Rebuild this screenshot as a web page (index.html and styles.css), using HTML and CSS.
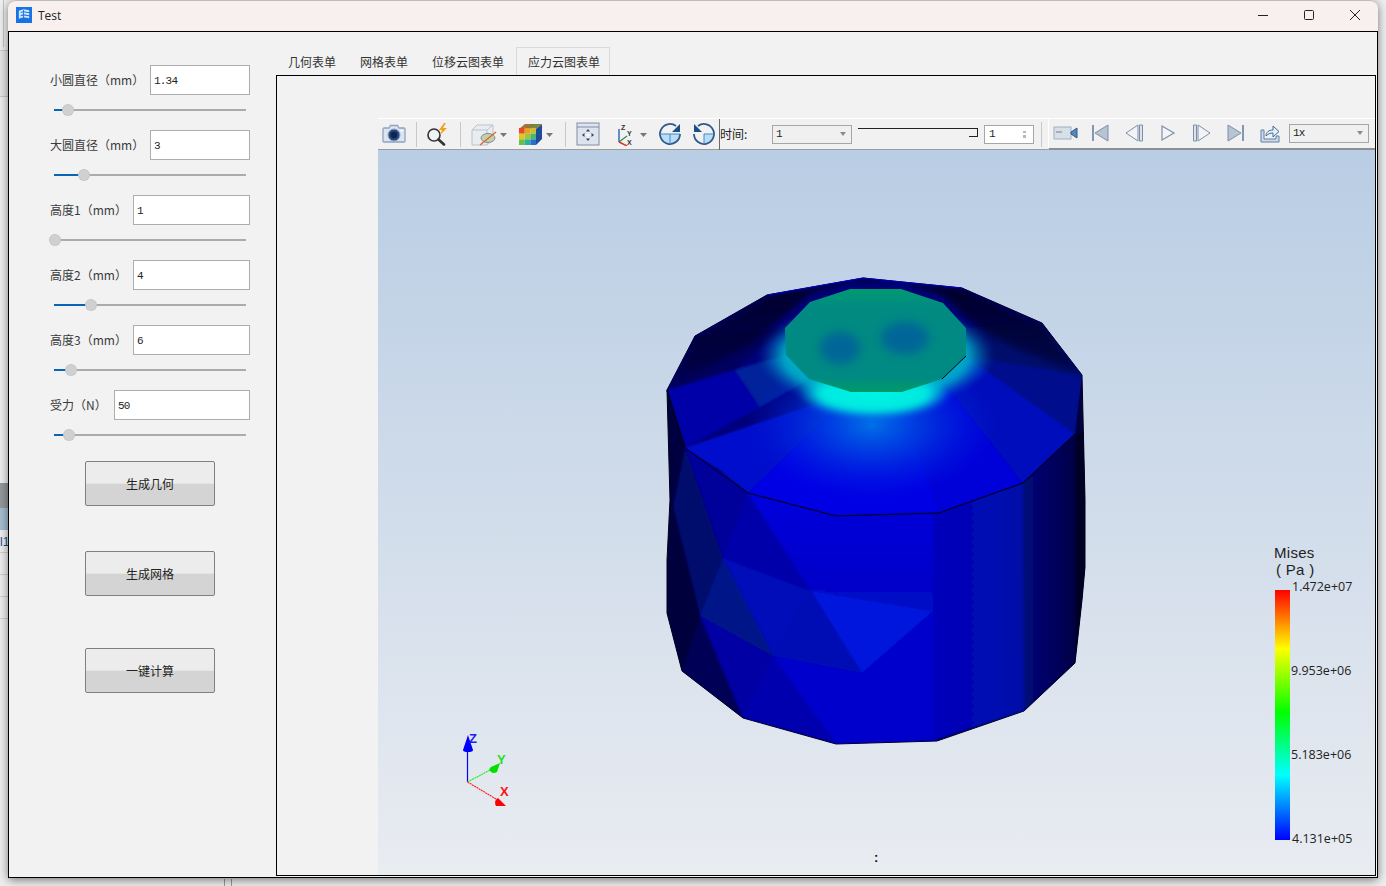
FILE: index.html
```html
<!DOCTYPE html>
<html lang="zh">
<head>
<meta charset="utf-8">
<title>Test</title>
<link rel="stylesheet" href="styles.css">
</head>
<body>
<div class="desk-top"></div>
<div class="desk-mid"></div>
<div class="desk-a"></div>
<div class="desk-b"></div>
<div class="desk-c">l1</div>
<div class="desk-lines"></div>
<div class="desk-d"></div>
<div class="window">
  <header class="titlebar">
    <svg class="app-icon" width="16" height="16" viewBox="0 0 17 17">
      <rect width="17" height="17" fill="#1673e6"/>
      <path d="M3 4l5-1.500 6 1v2l-6-1-3 .8v1.200l3-.8 6 1v2l-6-1-3 .8v1.200l3-.8 6 1v2l-6-1-5 1.500z" fill="#d5e6fb"/>
      <path d="M8 3v10" stroke="#1673e6" stroke-width="1"/>
    </svg>
    <span class="app-title">Test</span>
    <div class="caption">
      <span class="cap-btn"><svg width="12" height="12" viewBox="0 0 12 12"><path d="M1 6.500h10" stroke="#222" fill="none"/></svg></span>
      <span class="cap-btn"><svg width="12" height="12" viewBox="0 0 12 12"><rect x="1.500" y="1.500" width="9" height="9" rx="1" stroke="#222" fill="none"/></svg></span>
      <span class="cap-btn"><svg width="12" height="12" viewBox="0 0 12 12"><path d="M1 1l10 10M11 1L1 11" stroke="#222" fill="none"/></svg></span>
    </div>
  </header>
  <div class="body">
    <aside class="panel">
      <div class="param">
        <div class="row"><span class="label">小圆直径（mm）</span><span class="field w100">1.34</span></div>
        <div class="slider"><i class="fill" style="width:14px"></i><i class="thumb"></i><i class="rest"></i></div>
      </div>
      <div class="param">
        <div class="row"><span class="label">大圆直径（mm）</span><span class="field w100">3</span></div>
        <div class="slider"><i class="fill" style="width:30px"></i><i class="thumb"></i><i class="rest"></i></div>
      </div>
      <div class="param">
        <div class="row"><span class="label">高度1（mm）</span><span class="field w117">1</span></div>
        <div class="slider"><i class="fill" style="width:1px"></i><i class="thumb"></i><i class="rest"></i></div>
      </div>
      <div class="param">
        <div class="row"><span class="label">高度2（mm）</span><span class="field w117">4</span></div>
        <div class="slider"><i class="fill" style="width:37px"></i><i class="thumb"></i><i class="rest"></i></div>
      </div>
      <div class="param">
        <div class="row"><span class="label">高度3（mm）</span><span class="field w117">6</span></div>
        <div class="slider"><i class="fill" style="width:17px"></i><i class="thumb"></i><i class="rest"></i></div>
      </div>
      <div class="param">
        <div class="row"><span class="label">受力（N）</span><span class="field w136">50</span></div>
        <div class="slider"><i class="fill" style="width:15px"></i><i class="thumb"></i><i class="rest"></i></div>
      </div>
      <button class="action a1">生成几何</button>
      <button class="action a2">生成网格</button>
      <button class="action a3">一键计算</button>
    </aside>
    <main class="main">
      <nav class="tabs">
        <span class="tab">几何表单</span>
        <span class="tab">网格表单</span>
        <span class="tab">位移云图表单</span>
        <span class="tab active">应力云图表单</span>
      </nav>
      <section class="pane">
        <div class="viewport">
          <div class="toolbar">
            <span class="ib w32">
              <svg width="24" height="24" viewBox="0 0 24 24"><path d="M2 6h5l1.500-2.500h7L17 6h5a1 1 0 0 1 1 1v12a1 1 0 0 1-1 1H2a1 1 0 0 1-1-1V7a1 1 0 0 1 1-1z" fill="#dbe4f0" stroke="#8fa3c0" stroke-width="1.300"/><circle cx="12" cy="13" r="6" fill="#2a4a80" stroke="#8fa3c0"/><circle cx="12" cy="13" r="3.400" fill="#0f2550"/><rect x="18.500" y="8" width="2.500" height="1.500" fill="#fff"/></svg>
            </span>
            <i class="sep m6"></i>
            <span class="ib w40">
              <svg width="24" height="24" viewBox="0 0 24 24"><circle cx="9" cy="13" r="6" fill="#eef3f8" stroke="#333" stroke-width="1.600"/><path d="M13.500 17.500l5.500 5" stroke="#333" stroke-width="2.600" stroke-linecap="round"/><path d="M19 1l-5 7h3l-2 5 7-7h-4l3-5z" fill="#f2a31c"/></svg>
            </span>
            <i class="sep m3"></i>
            <span class="ib w46 left">
              <svg width="46" height="24" viewBox="0 0 46 24"><path d="M11 8l5-5h16v15l-6 5H11z" fill="#e9edf2" stroke="#b9c3d2"/><path d="M11 8h15v15M26 8l6-5" fill="none" stroke="#b9c3d2"/><ellipse cx="27" cy="16" rx="7" ry="4.500" fill="#c4d0a8" stroke="#889"/><path d="M19 23l16-13" stroke="#d8622a" stroke-width="1.200"/><path d="M39 11h7l-3.500 4z" fill="#777"/></svg>
            </span>
            <span class="ib w46 left">
              <svg width="46" height="24" viewBox="0 0 46 24"><path d="M29 7l6-5v15l-6 6z" fill="#1e4c9c"/><path d="M12 7l6-5h17l-6 5z" fill="#8a7a3a"/><path d="M14 5.500h6M17 3.500h6" stroke="#c46a3a"/><path d="M24 5.500h5M27 3.500h5" stroke="#5aa04a"/><rect x="12" y="6" width="5.700" height="5.700" fill="#e24a2a"/><rect x="17.700" y="6" width="5.700" height="5.700" fill="#e8a020"/><rect x="23.400" y="6" width="5.600" height="5.700" fill="#c8c030"/><rect x="12" y="11.700" width="5.700" height="5.700" fill="#e8c422"/><rect x="17.700" y="11.700" width="5.700" height="5.700" fill="#9ac83a"/><rect x="23.400" y="11.700" width="5.600" height="5.700" fill="#4ab86a"/><rect x="12" y="17.400" width="5.700" height="5.600" fill="#6cbf46"/><rect x="17.700" y="17.400" width="5.700" height="5.600" fill="#2ab0a0"/><rect x="23.400" y="17.400" width="5.600" height="5.600" fill="#2a70c8"/><path d="M39 11h7l-3.500 4z" fill="#777"/></svg>
            </span>
            <i class="sep m12"></i>
            <span class="ib w44">
              <svg width="24" height="24" viewBox="0 0 24 24"><rect x="1" y="1" width="22" height="22" fill="#dde4ee" stroke="#7f8ea6"/><path d="M1 5h22" stroke="#7f8ea6"/><path d="M12 8v10M7 13h10" stroke="#fff"/><path d="M12 7l-2 2.500h4zM12 19l-2-2.500h4zM6 13l2.500-2v4zM18 13l-2.500-2v4z" fill="#2f3f58"/></svg>
            </span>
            <span class="ib w40 left">
              <svg width="40" height="24" viewBox="0 0 40 24"><path d="M9 20V7" stroke="#2b5fb0" stroke-width="1.400"/><path d="M9 20l8-6" stroke="#2b9a4a" stroke-width="1.400"/><path d="M9 20l8 4" stroke="#e03030" stroke-width="1.400"/><text x="11" y="8" class="mini">Z</text><text x="17" y="14" class="mini">Y</text><text x="17" y="23" class="mini">X</text><path d="M30 11h7l-3.500 4z" fill="#777"/></svg>
            </span>
            <span class="ib w40">
              <svg width="24" height="24" viewBox="0 0 24 24"><path d="M2 12h20a10 10 0 0 1-20 0z" fill="#bcdcf4"/><path d="M18 4A10 10 0 1 0 22 12" fill="none" stroke="#2d5a8c" stroke-width="1.800"/><path d="M22 2v8h-8z" fill="#1c4e86"/><path d="M2 12h20M12 12v10" stroke="#3a8ad0"/></svg>
            </span>
            <span class="ib w28">
              <svg width="24" height="24" viewBox="0 0 24 24"><path d="M12 12h10a10 10 0 0 1-10 10z" fill="#bcdcf4"/><path d="M6 4A10 10 0 1 1 2 12" fill="none" stroke="#2d5a8c" stroke-width="1.800"/><path d="M2 2v8h8z" fill="#1c4e86"/><path d="M12 12h10M12 12v10" stroke="#3a8ad0"/></svg>
            </span>
            <i class="vline"></i>
            <span class="tb-label">时间:</span>
            <span class="combo">1<i class="caret"></i></span>
            <span class="timeline"><i class="tl-knob"></i></span>
            <span class="spin">1<i class="spin-arrows"></i></span>
            <i class="sep m7"></i>
            <div class="player">
              <span class="ib w34"><svg width="26" height="16" viewBox="0 0 26 16"><rect x="1" y="2" width="17" height="12" fill="#d7dfe9" stroke="#9fb0c6"/><rect x="3" y="6" width="6" height="2" fill="#aab"/><path d="M18 7l6-4v10l-6-4z" fill="#5d86b8" stroke="#2d5a8c"/></svg></span>
              <span class="ib w34"><svg width="20" height="20" viewBox="0 0 20 20"><rect x="2" y="2" width="2" height="16" fill="#8396b4"/><path d="M18 2v16L5 10z" fill="#b8c3d3" stroke="#7e8fa9"/></svg></span>
              <span class="ib w34"><svg width="20" height="20" viewBox="0 0 20 20"><path d="M14 2v16L2 10z" fill="#f2f4f8" stroke="#7e8fa9"/><path d="M15.500 2h3v16h-3z" fill="#dbe2ec" stroke="#7e8fa9"/></svg></span>
              <span class="ib w34"><svg width="20" height="20" viewBox="0 0 20 20"><path d="M4 3v14l12-7z" fill="#f2f4f8" stroke="#7e8fa9" stroke-width="1.200"/></svg></span>
              <span class="ib w34"><svg width="20" height="20" viewBox="0 0 20 20"><path d="M1.500 2h3v16h-3z" fill="#dbe2ec" stroke="#7e8fa9"/><path d="M6 2v16l12-8z" fill="#f2f4f8" stroke="#7e8fa9"/></svg></span>
              <span class="ib w34"><svg width="20" height="20" viewBox="0 0 20 20"><path d="M2 2v16l13-8z" fill="#b8c3d3" stroke="#7e8fa9"/><rect x="16" y="2" width="2" height="16" fill="#8396b4"/></svg></span>
              <span class="ib w34"><svg width="22" height="22" viewBox="0 0 22 22"><path d="M2 8v12h18v-6h-3v3H5V8z" fill="#cfdbe9" stroke="#5f7fa8"/><path d="M7 14c0-4 3-6 7-6V4l6 5.500-6 5.500v-4c-3 0-5 1-7 3z" fill="#e6edf5" stroke="#3d6a9c"/></svg></span>
              <span class="combo c2">1x<i class="caret"></i></span>
            </div>
          </div>
          <div class="canvas">
            <svg class="scene" viewBox="378 150 997 725" xmlns="http://www.w3.org/2000/svg">
              <defs>
                <clipPath id="body"><polygon points="667,390 695,336 767,295 863,278 962,288 1042,323 1082,375 1085,500 1085,567 1082,600 1075,663 1024,711 937,741 836,744 743,718 682,671 667,613 667,560 670,500"/></clipPath>
                <clipPath id="cone"><polygon points="667,390 695,336 767,295 863,278 962,288 1042,323 1082,375 1075,434 1023,483 939,513 836,516 748,493 685,448"/></clipPath>
                <clipPath id="face"><polygon points="785,328 810,302 850,289 901,289 943,303 966,328 966,356 942,379 902,392 851,392 809,379 786,355"/></clipPath>
                <radialGradient id="ring">
                  <stop offset="0" stop-color="#00d0d4"/>
                  <stop offset=".78" stop-color="#00c0cc"/>
                  <stop offset="1" stop-color="#0070c8" stop-opacity="0"/>
                </radialGradient>
                <radialGradient id="core">
                  <stop offset="0" stop-color="#00f4e4"/>
                  <stop offset=".7" stop-color="#00e8e0"/>
                  <stop offset="1" stop-color="#00d0e0" stop-opacity="0"/>
                </radialGradient>
                <radialGradient id="wash">
                  <stop offset="0" stop-color="#0070e8"/>
                  <stop offset=".45" stop-color="#0044e0" stop-opacity=".7"/>
                  <stop offset="1" stop-color="#0020e0" stop-opacity="0"/>
                </radialGradient>
                <linearGradient id="backdark" x1="0" y1="0" x2="0" y2="1">
                  <stop offset="0" stop-color="#000020" stop-opacity=".95"/>
                  <stop offset=".75" stop-color="#000030" stop-opacity=".6"/>
                  <stop offset="1" stop-color="#000030" stop-opacity="0"/>
                </linearGradient>
                <linearGradient id="topface" x1="0" y1="0" x2="0" y2="1">
                  <stop offset="0" stop-color="#009a70"/>
                  <stop offset=".18" stop-color="#008a82"/>
                  <stop offset=".85" stop-color="#008a84"/>
                  <stop offset="1" stop-color="#009a68"/>
                </linearGradient>
                <linearGradient id="sideR" x1="0" y1="0" x2="1" y2="0">
                  <stop offset="0" stop-color="#0000bc"/>
                  <stop offset=".8" stop-color="#000cae"/>
                  <stop offset="1" stop-color="#0010a4"/>
                </linearGradient>
                <linearGradient id="sideE" x1="0" y1="0" x2="1" y2="0">
                  <stop offset="0" stop-color="#00087c"/>
                  <stop offset="1" stop-color="#000048"/>
                </linearGradient>
                <linearGradient id="sideF" x1="0" y1="0" x2="0" y2="1">
                  <stop offset="0" stop-color="#0000dc"/>
                  <stop offset="1" stop-color="#0008c4"/>
                </linearGradient>
                <filter id="soft" x="-30%" y="-30%" width="160%" height="160%"><feGaussianBlur stdDeviation="5"/></filter>
                <filter id="softer" x="-30%" y="-30%" width="160%" height="160%"><feGaussianBlur stdDeviation="3"/></filter>
                <filter id="fine" x="-5%" y="-5%" width="110%" height="110%"><feGaussianBlur stdDeviation=".9"/></filter>
                <linearGradient id="bar" x1="0" y1="0" x2="0" y2="1">
                  <stop offset="0" stop-color="#ff0000"/>
                  <stop offset=".235" stop-color="#ffff00"/>
                  <stop offset=".49" stop-color="#00ff00"/>
                  <stop offset=".74" stop-color="#00ffff"/>
                  <stop offset="1" stop-color="#0000ff"/>
                </linearGradient>
              </defs>

              <polygon points="667,390 695,336 767,295 863,278 962,288 1042,323 1082,375 1085,500 1085,567 1082,600 1075,663 1024,711 937,741 836,744 743,718 682,671 667,613 667,560 670,500" fill="#000040" stroke="#000018"/>

              <g clip-path="url(#body)">
                <g filter="url(#fine)">
                  <polygon points="685,448 1023,483 1024,711 743,718 700,616" fill="#0000b0"/>
                  <polygon points="685,448 748,493 723,558" fill="#00009a"/>
                  <polygon points="685,448 723,558 700,616 673,507" fill="#00086c"/>
                  <polygon points="748,493 811,591 723,558" fill="#0000aa"/>
                  <polygon points="748,493 836,516 939,513 933,611 811,591" fill="url(#sideF)"/>
                  <polygon points="723,558 811,591 773,656" fill="#0008b8"/>
                  <polygon points="723,558 773,656 700,616" fill="#001488"/>
                  <polygon points="811,591 933,611 862,673" fill="#0014dc"/>
                  <polygon points="811,591 862,673 773,656" fill="#000cb4"/>
                  <polygon points="773,656 862,673 933,611 937,741 836,744" fill="#0000cc"/>
                  <polygon points="773,656 836,744 743,718" fill="#0000ae"/>
                  <polygon points="700,616 773,656 743,718" fill="#0000a4"/>
                  <polygon points="700,616 743,718 682,671" fill="#000056"/>
                  <polygon points="673,507 700,616 682,671 667,613" fill="#00003c"/>
                  <polygon points="933,505 1023,483 1024,711 933,741" fill="url(#sideR)"/>
                  <polygon points="1023,483 1075,434 1075,663 1024,711" fill="url(#sideE)"/>
                  <polygon points="1075,434 1090,430 1090,600 1075,663" fill="#000028"/>
                </g>
              </g>

              <g clip-path="url(#cone)">
                <g filter="url(#fine)">
                  <rect x="660" y="270" width="430" height="250" fill="#00007c"/>
                  <polygon points="667,390 735,370 760,407 685,448" fill="#0000a8"/>
                  <polygon points="735,370 786,355 809,379 760,407" fill="#00209a"/>
                  <polygon points="685,448 851,392 748,493 720,470" fill="#0010cc"/>
                  <polygon points="748,493 851,392 902,392 939,513 836,516" fill="#0000e4"/>
                  <polygon points="902,392 942,379 1023,483 939,513" fill="#0000d8"/>
                  <polygon points="942,379 966,356 1075,434 1023,483" fill="#000cbc"/>
                  <polygon points="966,356 1082,375 1075,434" fill="#00108c"/>
                  <polygon points="667,390 695,336 786,328 735,370" fill="#000060"/>
                  <polygon points="1042,323 1082,375 966,356 966,328" fill="#00106c"/>
                </g>
                <ellipse cx="872" cy="425" rx="125" ry="74" fill="url(#wash)"/>
                <ellipse cx="876" cy="356" rx="118" ry="52" fill="url(#ring)" filter="url(#softer)" opacity=".85"/>
                <ellipse cx="874" cy="394" rx="76" ry="24" fill="url(#core)" filter="url(#softer)"/>
                <polygon points="667,390 695,336 767,295 863,278 962,288 1042,323 1082,375 1020,350 990,335 966,318 943,296 901,282 850,282 810,294 778,322 750,345" fill="url(#backdark)" filter="url(#softer)"/>
              </g>

              <polygon points="785,328 810,302 850,289 901,289 943,303 966,328 966,356 942,379 902,392 851,392 809,379 786,355" fill="url(#topface)"/>
              <g clip-path="url(#face)">
                <g filter="url(#soft)" opacity=".85">
                  <ellipse cx="840" cy="348" rx="20" ry="16" fill="#00609c"/>
                  <ellipse cx="905" cy="338" rx="24" ry="16" fill="#00609c"/>
                </g>
              </g>

              <polyline points="685,448 748,493 836,516 939,513 1023,483 1075,434" fill="none" stroke="#000018" stroke-width="1"/>
              <line x1="942" y1="379" x2="966" y2="356" stroke="#000" stroke-width="1"/>
              <polyline points="667,390 685,448" fill="none" stroke="#000020" stroke-width="1.500"/>
              <polyline points="767,295 863,278 962,288" fill="none" stroke="#0000c8" stroke-width="1.200"/>

              <line x1="467.500" y1="782" x2="467.500" y2="746" stroke="#0000ff" stroke-width="1.200"/>
              <path d="M468 735l5 15a5 2 0 0 1-10 0z" fill="#0000ff"/>
              <text x="469" y="743" class="ax ax-b">Z</text>
              <line x1="467.500" y1="782" x2="492" y2="769" stroke="#22ee22" stroke-width="1.200" stroke-dasharray="2 .6"/>
              <path d="M500 763l-3 9a4 3 0 0 1-6-5z" fill="#00e000"/>
              <text x="497" y="764" class="ax ax-g">Y</text>
              <line x1="467.500" y1="782" x2="496" y2="799" stroke="#ff2020" stroke-width="1.200" stroke-dasharray="2 .6"/>
              <path d="M506 806l-10 0a4 5 0 0 1 2-8z" fill="#ff0000"/>
              <text x="500" y="796" class="ax ax-r">X</text>

              <rect x="1275" y="590" width="15" height="250" fill="url(#bar)"/>
              <text x="1274" y="558" class="lg-title">Mises</text>
              <text x="1276" y="575" class="lg-title">( Pa )</text>
              <text x="1292" y="591" class="lg">1.472e+07</text>
              <text x="1291" y="675" class="lg">9.953e+06</text>
              <text x="1291" y="759" class="lg">5.183e+06</text>
              <text x="1292" y="843" class="lg">4.131e+05</text>
              <text x="874" y="862" class="colon">:</text>
            </svg>
          </div>
        </div>
      </section>
    </main>
  </div>
</div>
</body>
</html>
```
FILE: styles.css
```css
* { box-sizing: border-box; }
html, body { margin: 0; height: 100%; }
body {
  position: relative;
  width: 1386px;
  height: 886px;
  overflow: hidden;
  background: #eeeeee;
  font-family: "Noto Sans CJK SC", "Liberation Sans", sans-serif;
  font-size: 12px;
  color: #333;
}
.desk-top { position: absolute; left: 3px; top: 0; width: 1px; height: 47px; background: #c4c4c4; }
.desk-mid { position: absolute; left: 0; top: 50px; width: 8px; height: 47px; background: #e4e4e4; border-top: 1px solid #c8c8c8; border-bottom: 1px solid #c8c8c8; }
.desk-a { position: absolute; left: 0; top: 483px; width: 8px; height: 25px; background: #94989c; }
.desk-b { position: absolute; left: 0; top: 508px; width: 8px; height: 22px; background: #a6bdd2; }
.desk-c { position: absolute; left: 0; top: 535px; width: 8px; font: 12px "Liberation Sans", sans-serif; color: #124f96; }
.desk-lines { position: absolute; left: 0; top: 552px; width: 8px; height: 67px; background: repeating-linear-gradient(#cfcfcf 0, #cfcfcf 1px, transparent 1px, transparent 22px); }
.desk-d { position: absolute; left: 224px; top: 879px; width: 8px; height: 7px; border-left: 1px solid #999; border-right: 1px solid #999; }

.window {
  position: absolute;
  left: 8px;
  top: 0;
  width: 1370px;
  height: 878px;
  display: flex;
  flex-direction: column;
  background: #f2f2f2;
  border-radius: 8px 8px 4px 4px;
  box-shadow: 0 2px 10px rgba(0, 0, 0, .5);
}
.titlebar {
  height: 31px;
  flex: none;
  display: flex;
  align-items: center;
  padding: 0 0 2px 8px;
  background: #f7f0ef;
  border-top: 1px solid #bdbdbd;
  border-radius: 8px 8px 0 0;
}
.app-icon { display: block; flex: none; }
.app-title { margin-left: 6px; font: 12px "Open Sans", sans-serif; color: #222; }
.caption { margin-left: auto; display: flex; }
.cap-btn { width: 46px; height: 28px; display: flex; align-items: center; justify-content: center; }
.cap-btn svg { display: block; }

.body {
  flex: none;
  height: 847px;
  display: flex;
  border: 1px solid #000;
  background: #f2f2f2;
}
.panel {
  width: 267px;
  flex: none;
  padding: 33px 26px 0 41px;
  display: flex;
  flex-direction: column;
}
.param { height: 65px; flex: none; }
.row { height: 30px; display: flex; align-items: center; justify-content: space-between; }
.label { white-space: nowrap; line-height: 30px; color: #3a3a3a; }
.field {
  height: 30px;
  padding: 1px 0 0 3px;
  background: #fff;
  border: 1px solid #adadad;
  font: 11px/28px "Liberation Mono", monospace;
  letter-spacing: -.8px;
  color: #222;
}
.w100 { width: 100px; }
.w117 { width: 117px; }
.w136 { width: 136px; }
.slider { margin-top: 9px; height: 12px; padding: 0 4px; display: flex; align-items: center; }
.fill { height: 2px; background: #0a64b4; flex: none; display: block; }
.thumb { width: 12px; height: 12px; margin: 0 -6px; flex: none; border-radius: 50%; background: #d0d0d0; border: 1px dotted #bdbdbd; position: relative; display: block; }
.rest { flex: 1; height: 2px; background: #ababab; display: block; }
.action {
  width: 130px;
  height: 45px;
  flex: none;
  margin-left: 35px;
  padding: 0;
  border: 1px solid #808080;
  border-radius: 2px;
  background: linear-gradient(#ececec 0, #ececec 49%, #d4d4d4 52%, #d4d4d4 100%);
  font: 12px "Noto Sans CJK SC", sans-serif;
  color: #222;
}
.a1 { margin-top: 6px; }
.a2 { margin-top: 45px; }
.a3 { margin-top: 52px; }

.main { width: 1100px; flex: none; display: flex; flex-direction: column; height: 844px; }
.tabs { height: 43px; flex: none; padding: 15px 0 0; display: flex; gap: 2px; }
.tab { height: 28px; padding: 0 10px 0 12px; line-height: 29px; white-space: nowrap; color: #333; }
.tab.active { border: 1px solid #dadada; border-bottom: 0; padding: 0 9px 0 11px; line-height: 28px; background: #f2f2f2; }
.pane {
  height: 801px;
  flex: none;
  padding: 42px 0 0 101px;
  border: 1px solid #000;
  display: flex;
}
.viewport { flex: 1; display: flex; flex-direction: column; min-width: 0; }
.toolbar {
  height: 32px;
  flex: none;
  display: flex;
  align-items: center;
  background: #f1f1f1;
  border-top: 1px solid #fff;
  border-bottom: 1px solid #9c9c9c;
}
.ib { display: flex; align-items: center; justify-content: center; height: 30px; flex: none; }
.ib svg { display: block; }
.ib.left { justify-content: flex-start; }
.w28 { width: 28px; } .w32 { width: 32px; } .w34 { width: 34px; } .w40 { width: 40px; } .w44 { width: 44px; } .w46 { width: 46px; }
.sep { width: 1px; height: 25px; background: #c8c8c8; flex: none; display: block; }
.m3 { margin-left: 3px; } .m6 { margin-left: 6px; } .m7 { margin-left: 7px; } .m12 { margin-left: 12px; }
.vline { width: 1px; height: 31px; margin-left: 1px; background: #6a6a6a; flex: none; display: block; }
.tb-label { width: 52px; flex: none; color: #222; line-height: 16px; padding-bottom: 1px; }
.combo {
  width: 80px;
  height: 19px;
  flex: none;
  display: flex;
  align-items: center;
  justify-content: space-between;
  padding: 0 5px 0 3px;
  border: 1px solid #a6a6a6;
  background: #f0f0f0;
  font: 11px "Liberation Mono", monospace;
  letter-spacing: -.8px;
  color: #222;
}
.caret { width: 0; height: 0; border: 3.5px solid transparent; border-top: 4px solid #8a8a8a; border-bottom: 0; display: block; }
.c2 { margin-left: 2px; }
.timeline {
  width: 120px;
  height: 12px;
  margin: -1px 0 0 6px;
  flex: none;
  display: flex;
  justify-content: flex-end;
  border-top: 1px solid #222;
}
.tl-knob { width: 9px; height: 8px; border-right: 1px solid #222; border-bottom: 1px solid #222; display: block; }
.spin {
  width: 50px;
  height: 19px;
  margin-left: 6px;
  flex: none;
  display: flex;
  align-items: center;
  justify-content: space-between;
  padding: 0 6px 0 4px;
  border: 1px solid #a6a6a6;
  background: #fff;
  font: 11px "Liberation Mono", monospace;
  color: #222;
}
.spin-arrows {
  width: 5px;
  height: 10px;
  display: block;
  background:
    linear-gradient(#fff, #fff) center / 5px 2px no-repeat,
    linear-gradient(#b8b8b8, #b8b8b8) center / 3px 7px no-repeat;
}
.player {
  flex: 1;
  height: 31px;
  margin-left: 6px;
  display: flex;
  align-items: center;
  border-left: 1px solid #fff;
  border-bottom: 2px solid #8f8f8f;
}
.canvas { flex: 1; min-height: 0; background: linear-gradient(#b9cde4, #e9ecf1); }
.scene { display: block; width: 100%; height: 100%; }
.mini { font: 700 7px "Liberation Sans", sans-serif; fill: #333; }
.ax { font: 700 13px "Liberation Sans", sans-serif; }
.ax-b { fill: #2020f0; }
.ax-g { fill: #20e020; }
.ax-r { fill: #ff1010; }
.lg-title { font: 15px "Liberation Sans", sans-serif; letter-spacing: .3px; fill: #222; }
.lg { font: 12.500px "Open Sans", sans-serif; fill: #222; }
.colon { font: 700 13px "Liberation Sans", sans-serif; fill: #111; }
```
